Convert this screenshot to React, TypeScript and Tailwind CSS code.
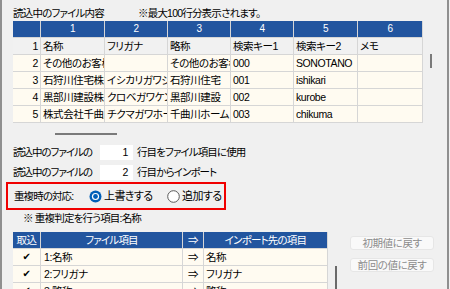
import React from "react";

const topRows: string[][] = [
  ["1", "名称", "フリガナ", "略称", "検索キー1", "検索キー2", "メモ"],
  ["2", "その他のお客様", "", "その他のお客様", "000", "SONOTANO", ""],
  ["3", "石狩川住宅株式会社", "イシカリガワジュウタク", "石狩川住宅", "001", "ishikari", ""],
  ["4", "黒部川建設株式会社", "クロベガワケンセツ", "黒部川建設", "002", "kurobe", ""],
  ["5", "株式会社千曲川ホーム", "チクマガワホーム", "千曲川ホーム", "003", "chikuma", ""],
];

const bottomRows: string[][] = [
  ["1:名称", "名称"],
  ["2:フリガナ", "フリガナ"],
  ["3:略称", "略称"],
];

function RadioOn() {
  return (
    <svg width="13" height="13" viewBox="0 0 13 13" className="shrink-0">
      <circle cx="6.5" cy="6.5" r="6" fill="#005fb8" />
      <circle cx="6.5" cy="6.5" r="3.6" fill="#ffffff" />
      <circle cx="6.5" cy="6.5" r="2.4" fill="#005fb8" />
    </svg>
  );
}

function RadioOff() {
  return (
    <svg width="13" height="13" viewBox="0 0 13 13" className="shrink-0">
      <circle cx="6.5" cy="6.5" r="5.8" fill="#ffffff" stroke="#5a5a5a" strokeWidth="1" />
    </svg>
  );
}

export default function App() {
  return (
    <div className="w-[450px] h-[289px] bg-[#f0f0f0] overflow-hidden font-['Liberation_Sans','Noto_Sans_CJK_JP',sans-serif] [font-feature-settings:'palt'] text-[10.5px] tracking-[-0.4px] text-black leading-none whitespace-nowrap">
      <div className="w-[449px] h-[289px] border-l-2 border-r-2 border-[#8f8f8f] pl-[11px] flex flex-col">
        {/* title */}
        <div className="h-[21px] shrink-0 flex items-start pt-[6px]">
          <span className="w-[125px] leading-[14px] tracking-[-0.8px]">読込中のファイル内容</span>
          <span className="leading-[14px] tracking-[-0.8px]">※最大100行分表示されます。</span>
        </div>

        {/* top table */}
        <div className="flex shrink-0">
          <div className="grid grid-cols-[27px_63px_62px_62px_62px_63px_64px] auto-rows-[16px] gap-px bg-[#d6d6d6] border-b border-r border-[#d6d6d6]">
            <div className="bg-[#22559f]" />
            {["1", "2", "3", "4", "5", "6"].map((h) => (
              <div key={h} className="bg-[#22559f] text-white text-[10px] flex items-center justify-center">
                {h}
              </div>
            ))}
            {topRows.map((r, ri) =>
              r.map((c, ci) => (
                <div
                  key={ri + "-" + ci}
                  className={
                    (ri === 0 ? "bg-[#f1f1f1] " : "bg-[#fffbf1] ") +
                    (ci === 0 ? "justify-end pr-[2px] " : "pl-[2px] ") +
                    "flex items-center overflow-hidden leading-[16px]"
                  }
                >
                  {c}
                </div>
              ))
            )}
          </div>
          <div className="w-[18px] shrink-0">
            <div className="ml-[7px] mt-[33px] w-[2px] h-[14px] bg-[#7a7a7a]" />
          </div>
        </div>

        {/* horizontal thumb */}
        <div className="mt-[10px] ml-[42px] w-[62px] h-[2px] bg-[#7a7a7a] shrink-0" />

        {/* row settings */}
        <div className="mt-[10px] h-[15px] flex items-center shrink-0">
          <span className="w-[87px] tracking-[-1px]">読込中のファイルの</span>
          <div className="w-[33px] h-[15px] bg-white flex items-center justify-end pr-[5px]">1</div>
          <span className="ml-[4px] tracking-[-0.9px]">行目をファイル項目に使用</span>
        </div>
        <div className="mt-[5px] h-[15px] flex items-center shrink-0">
          <span className="w-[87px] tracking-[-1px]">読込中のファイルの</span>
          <div className="w-[33px] h-[15px] bg-white flex items-center justify-end pr-[5px]">2</div>
          <span className="ml-[4px] tracking-[-0.9px]">行目からインポート</span>
        </div>

        {/* red box */}
        <div className="mt-[2px] ml-[-7px] w-[220px] h-[28px] shrink-0 border-2 border-[#f00000] flex items-center pl-[6px]">
          <span className="w-[75px] tracking-[-0.9px]">重複時の対応:</span>
          <RadioOn />
          <span className="ml-[2px] w-[63px] text-[11px] tracking-[-0.6px]">上書きする</span>
          <RadioOff />
          <span className="ml-[2px] text-[11px] tracking-[-0.6px]">追加する</span>
        </div>

        {/* note */}
        <div className="mt-[1px] h-[14px] flex items-center pl-[10px] shrink-0 tracking-[-0.8px]">※ 重複判定を行う項目:名称</div>

        {/* bottom area */}
        <div className="mt-[7px] flex shrink-0">
          <div className="grid grid-cols-[27px_141px_20px_123px] auto-rows-[16px] gap-px bg-[#d6d6d6] border-r border-[#d6d6d6]">
            <div className="bg-[#22559f] text-white flex items-center justify-center">取込</div>
            <div className="bg-[#22559f] text-white flex items-center justify-center tracking-[-0.8px]">ファイル項目</div>
            <div className="bg-[#22559f] text-white flex items-center justify-center">⇒</div>
            <div className="bg-[#22559f] text-white flex items-center justify-center tracking-[-0.8px]">インポート先の項目</div>
            {bottomRows.map((r, i) => (
              <React.Fragment key={i}>
                <div className="bg-[#fffbf1] flex items-center justify-center font-['DejaVu_Sans'] text-[10px]">✔</div>
                <div className="bg-[#fffbf1] flex items-center pl-[3px] overflow-hidden">{r[0]}</div>
                <div className="bg-[#fffbf1] flex items-center justify-center">⇒</div>
                <div className="bg-[#fffbf1] flex items-center pl-[2px] overflow-hidden">{r[1]}</div>
              </React.Fragment>
            ))}
          </div>
          <div className="w-[22px] shrink-0">
            <div className="ml-[7px] mt-[34px] w-[2px] h-[30px] bg-[#6a6a6a]" />
          </div>
          <div className="flex flex-col gap-[8px] pt-[4px]">
            <div className="w-[84px] h-[14px] rounded-[3px] bg-[#f9f9f9] border border-[#e6e6e6] text-[#8c8c8c] flex items-center justify-center">初期値に戻す</div>
            <div className="w-[84px] h-[14px] rounded-[3px] bg-[#f9f9f9] border border-[#e6e6e6] text-[#8c8c8c] flex items-center justify-center">前回の値に戻す</div>
          </div>
        </div>
      </div>
    </div>
  );
}
